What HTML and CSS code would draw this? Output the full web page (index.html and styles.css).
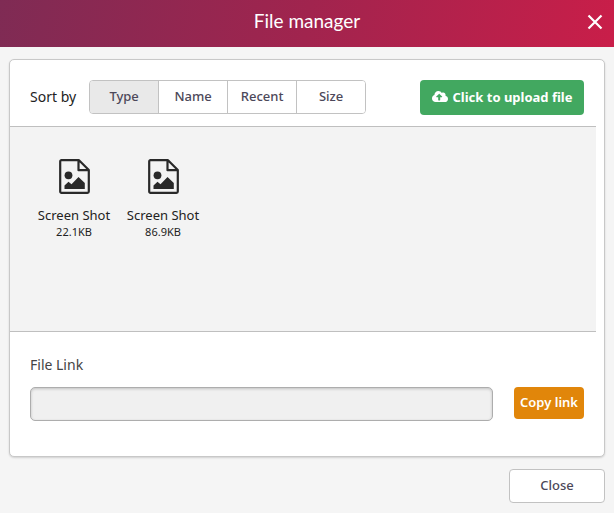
FILE: index.html
```html
<!DOCTYPE html>
<html lang="en">
<head>
<meta charset="utf-8">
<meta name="viewport" content="width=device-width, initial-scale=1">
<title>File manager</title>
<link rel="stylesheet" href="styles.css">
</head>
<body>
<svg class="symbols" aria-hidden="true">
  <symbol id="file-image" viewBox="0 0 31 35">
    <path d="M2.5 1.2H20L29.8 11V32.5a1.3 1.3 0 0 1-1.3 1.3H2.5a1.3 1.3 0 0 1-1.3-1.3V2.5a1.3 1.3 0 0 1 1.3-1.3ZM19.5 1.5V11.2H29.5" fill="none" stroke="currentColor" stroke-width="2.2" stroke-linejoin="round"/>
    <circle cx="9.5" cy="16.3" r="3.9" fill="currentColor"/>
    <path d="M5.5 30V26.5L9.5 22.7L12.5 25.2L19.5 18L25.8 24V30Z" fill="currentColor"/>
  </symbol>
</svg>
<header class="header">
  <h1 class="title">File manager</h1>
  <button class="dismiss" type="button" aria-label="Dismiss">
    <svg viewBox="0 0 16 16" aria-hidden="true"><path d="M1.5 1.5L14.5 14.5M14.5 1.5L1.5 14.5"/></svg>
  </button>
</header>
<main class="content">
  <section class="card">
    <div class="toolbar">
      <span class="sort-label" id="sort-label">Sort by</span>
      <div class="segments" role="group" aria-labelledby="sort-label">
        <button class="segment active" type="button" aria-pressed="true">Type</button>
        <button class="segment" type="button" aria-pressed="false">Name</button>
        <button class="segment" type="button" aria-pressed="false">Recent</button>
        <button class="segment" type="button" aria-pressed="false">Size</button>
      </div>
      <button class="upload" type="button">
        <svg class="cloud" viewBox="0 0 640 512" aria-hidden="true"><path fill="currentColor" d="M537.600 226.600c4.100-10.700 6.400-22.400 6.400-34.600 0-53-43-96-96-96-19.700 0-38.100 6-53.300 16.200C367 64.200 315.300 32 256 32c-88.400 0-160 71.600-160 160 0 2.700.1 5.400.2 8.100C40.200 219.800 0 273.200 0 336c0 79.500 64.500 144 144 144h368c70.700 0 128-57.300 128-128 0-61.900-44-113.600-102.400-125.400zM393.400 288H328v112c0 8.800-7.200 16-16 16h-48c-8.800 0-16-7.200-16-16V288h-65.400c-14.300 0-21.400-17.200-11.300-27.300l105.400-105.400c6.200-6.200 16.400-6.200 22.600 0l105.400 105.400c10.100 10.100 2.900 27.300-11.300 27.300z"/></svg>
        <span>Click to upload file</span>
      </button>
    </div>
    <ul class="files">
      <li class="file">
        <svg class="file-icon" aria-hidden="true"><use href="#file-image"/></svg>
        <span class="file-name">Screen Shot</span>
        <span class="file-size">22.1KB</span>
      </li>
      <li class="file">
        <svg class="file-icon" aria-hidden="true"><use href="#file-image"/></svg>
        <span class="file-name">Screen Shot</span>
        <span class="file-size">86.9KB</span>
      </li>
    </ul>
    <div class="link-area">
      <label class="link-label" for="file-link">File Link</label>
      <div class="link-row">
        <input class="link-input" id="file-link" type="text" readonly>
        <button class="copy" type="button">Copy link</button>
      </div>
    </div>
  </section>
  <footer class="footer">
    <button class="close" type="button">Close</button>
  </footer>
</main>
</body>
</html>
```
FILE: styles.css
```css
* {
  box-sizing: border-box;
}

body {
  margin: 0;
  background: #f5f5f5;
  color: #222;
  font-family: "Noto Sans", "Open Sans", sans-serif;
  font-size: 13px;
  line-height: 18px;
}

button,
input {
  margin: 0;
  padding: 0;
  font: inherit;
}

button {
  padding-bottom: 2px;
}

.symbols {
  display: none;
}

.header {
  display: grid;
  grid-template-columns: 1fr auto 1fr;
  align-items: center;
  height: 47px;
  padding: 0 11px 3px;
  background: linear-gradient(100deg, #7f2b54, #a1244e 50%, #c91e49);
  color: #fff;
}

.title {
  grid-column: 2;
  margin: 0;
  padding-bottom: 2px;
  font-family: Lato, sans-serif;
  font-size: 19px;
  font-weight: 400;
  line-height: 24px;
}

.dismiss {
  justify-self: end;
  width: 16px;
  height: 16px;
  padding: 0;
  border: 0;
  background: none;
}

.dismiss svg {
  display: block;
  fill: none;
  stroke: #fff;
  stroke-width: 2.2;
}

.content {
  padding: 12px 9px 10px;
}

.card {
  border: 1px solid #c8c8c8;
  border-radius: 5px;
  background: #fff;
  box-shadow: 0 1px 2px rgba(0, 0, 0, 0.15);
}

.toolbar {
  display: flex;
  align-items: flex-start;
  padding: 20px 20px 11px;
}

.sort-label {
  margin-right: 13px;
  font-size: 14px;
  line-height: 34px;
}

.segments {
  display: flex;
  border: 1px solid #c2c2c2;
  border-radius: 4px;
  overflow: hidden;
}

.segment {
  width: 69px;
  height: 32px;
  border: 0;
  border-right: 1px solid #c2c2c2;
  background: #fff;
  color: #4c4859;
  font-weight: 500;
}

.segment:last-child {
  width: 68px;
  border-right: 0;
}

.segment.active {
  background: #e9e9e9;
}

.upload {
  display: flex;
  align-items: center;
  justify-content: center;
  gap: 5px;
  width: 164px;
  height: 35px;
  margin-left: auto;
  border: 0;
  border-radius: 4px;
  background: #42a860;
  color: #fff;
  font-weight: 700;
}

.cloud {
  width: 16px;
  height: 13px;
}

.files {
  display: flex;
  align-items: flex-start;
  gap: 19px;
  min-height: 206px;
  margin: 0 8px 0 0;
  padding: 32px 29px;
  border: solid #bfbfbf;
  border-width: 1px 0;
  background: #f3f3f3;
  list-style: none;
}

.file {
  display: flex;
  flex-direction: column;
  align-items: center;
  width: 70px;
  white-space: nowrap;
}

.file-icon {
  width: 31px;
  height: 35px;
  margin-bottom: 12px;
  color: #292929;
}

.file-size {
  font-size: 11px;
  line-height: 16px;
}

.link-area {
  padding: 24px 20px 35px;
}

.link-label {
  display: block;
  margin-bottom: 13px;
  color: #444;
  font-size: 14px;
}

.link-row {
  display: flex;
  align-items: flex-start;
  gap: 21px;
}

.link-input {
  flex: 1;
  min-width: 0;
  height: 34px;
  padding: 0 10px;
  border: 1px solid #adadad;
  border-radius: 5px;
  background: #f0f0f0;
  box-shadow: inset 0 1px 3px rgba(0, 0, 0, 0.2);
}

.copy {
  width: 70px;
  height: 32px;
  border: 0;
  border-radius: 4px;
  background: #e1860a;
  color: #fff;
  font-weight: 600;
}

.footer {
  display: flex;
  justify-content: flex-end;
  padding-top: 12px;
}

.close {
  width: 96px;
  height: 34px;
  border: 1px solid #c2c2c2;
  border-radius: 4px;
  background: #fff;
  color: #4c4859;
  font-weight: 500;
}
```
